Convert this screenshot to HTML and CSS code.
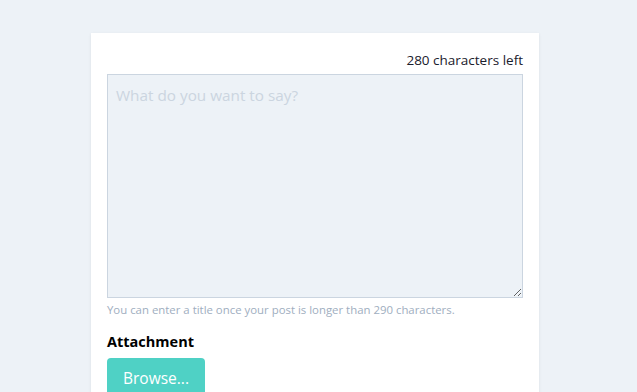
FILE: index.html
```html
<!DOCTYPE html>
<html lang="en">
<head>
    <meta charset="UTF-8">
    <meta name="viewport" content="width=device-width, initial-scale=1.0">
    <title>New post</title>
    <link rel="stylesheet" href="styles.css">
</head>
<body>
    <div class="card">
        <div class="counter">280 characters left</div>
        <textarea class="post" placeholder="What do you want to say?"></textarea>
        <p class="hint">You can enter a title once your post is longer than 290 characters.</p>
        <h3 class="label">Attachment</h3>
        <button class="browse">Browse...</button>
    </div>
</body>
</html>
```

FILE: styles.css
```css
body {
    margin: 0;
    padding: 33px 0 0;
    background-color: #edf2f7;
    font-family: 'Open Sans', 'Noto Sans', sans-serif;
    overflow: hidden;
}
.card {
    width: 416px;
    margin-left: 91px;
    padding: 16px 16px 40px;
    background: #fff;
    box-shadow: 0 1px 3px rgba(0, 0, 0, 0.08);
}
.counter {
    text-align: right;
    font-size: 13.5px;
    line-height: 20px;
    color: #1a202c;
    margin-top: 1px;
    margin-bottom: 4px;
}
.post {
    display: block;
    box-sizing: border-box;
    width: 416px;
    height: 224px;
    margin: 0;
    padding: 8px 8px;
    border: 1px solid #cbd5e0;
    background: #edf2f7;
    font-family: inherit;
    font-size: 15.3px;
    line-height: 24px;
    color: #2d3748;
}
.post::placeholder { color: #cbd5e0; }
.hint {
    margin: 4px 0 0;
    font-size: 11.4px;
    line-height: 16px;
    color: #a0aec0;
}
.label {
    margin: 14px 0 6px;
    font-size: 14.5px;
    line-height: 20px;
    font-weight: 700;
    color: #000;
}
.browse {
    border: none;
    border-radius: 4px;
    background: #4fd1c5;
    color: #fff;
    font-family: inherit;
    font-size: 15.5px;
    line-height: 24px;
    padding: 8px 16px;
}
```
